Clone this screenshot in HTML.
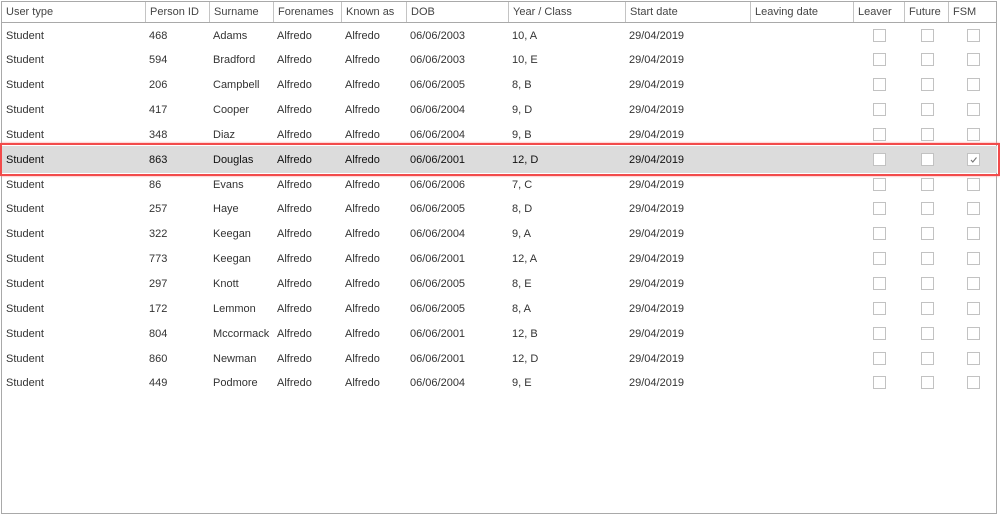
<!DOCTYPE html><html><head><style>
body{margin:0;width:1000px;height:517px;background:#fff;font-family:"Liberation Sans",Arial,sans-serif;font-size:11px;color:#333;position:relative;overflow:hidden}
.frame{position:absolute;left:1px;top:1px;width:996px;height:513px;border:1px solid #a9a9a9;box-sizing:border-box}
.hdr{position:absolute;left:1px;top:1px;width:996px;height:22px;border:1px solid #a9a9a9;box-sizing:border-box;background:#fff}
.h{position:absolute;top:0;height:20px;line-height:21px;border-right:1px solid #c4c4c4;padding-left:4px;box-sizing:border-box;color:#444}
.c{position:absolute;height:25px;line-height:25px;white-space:nowrap}
.cb{position:absolute;width:11px;height:11px;border:1px solid #c2c2c2;background:#fff}
.sel{position:absolute;left:0;top:143px;width:1000px;height:33px;border:2px solid #f24b4b;box-sizing:border-box;box-shadow:0 0 2px #f88}
.selbg{position:absolute;left:2px;top:146px;width:995px;height:27px;background:#dcdcdc}
</style></head><body>
<div class="frame"></div>
<div class="selbg"></div>
<div class="hdr">
<div class="h" style="left:0;width:144px">User type</div>
<div class="h" style="left:144px;width:64px">Person ID</div>
<div class="h" style="left:208px;width:64px">Surname</div>
<div class="h" style="left:272px;width:68px">Forenames</div>
<div class="h" style="left:340px;width:65px">Known as</div>
<div class="h" style="left:405px;width:102px">DOB</div>
<div class="h" style="left:507px;width:117px">Year / Class</div>
<div class="h" style="left:624px;width:125px">Start date</div>
<div class="h" style="left:749px;width:103px">Leaving date</div>
<div class="h" style="left:852px;width:51px">Leaver</div>
<div class="h" style="left:903px;width:44px">Future</div>
<div class="h" style="left:947px;width:49px;border-right:none">FSM</div>
</div>
<div id="rows"></div>
<div class="sel"></div>
<script>
var d=[["468","Adams","06/06/2003","10, A"],["594","Bradford","06/06/2003","10, E"],["206","Campbell","06/06/2005","8, B"],["417","Cooper","06/06/2004","9, D"],["348","Diaz","06/06/2004","9, B"],["863","Douglas","06/06/2001","12, D"],["86","Evans","06/06/2006","7, C"],["257","Haye","06/06/2005","8, D"],["322","Keegan","06/06/2004","9, A"],["773","Keegan","06/06/2001","12, A"],["297","Knott","06/06/2005","8, E"],["172","Lemmon","06/06/2005","8, A"],["804","Mccormack","06/06/2001","12, B"],["860","Newman","06/06/2001","12, D"],["449","Podmore","06/06/2004","9, E"]];
var h="";
d.forEach(function(r,i){var y=22.5+i*24.85;var st=i==5?"color:#111;":"";
var cells=[[6,"Student"],[149,r[0]],[213,r[1]],[277,"Alfredo"],[345,"Alfredo"],[410,r[2]],[512,r[3]],[629,"29/04/2019"]];
cells.forEach(function(c){h+='<div class="c" style="'+st+'left:'+c[0]+'px;top:'+(y+1)+'px">'+c[1]+'</div>'});
[873,921,967].forEach(function(x,j){h+='<div class="cb" style="left:'+x+'px;top:'+(y+6)+'px">'+(i==5&&j==2?'<svg width="11" height="11" style="position:absolute;left:0;top:0"><path d="M3 6 L4.8 8 L8.5 3.5" stroke="#777" stroke-width="1.1" fill="none"/></svg>':'')+'</div>'});});
document.getElementById("rows").innerHTML=h;
</script>
</body></html>
